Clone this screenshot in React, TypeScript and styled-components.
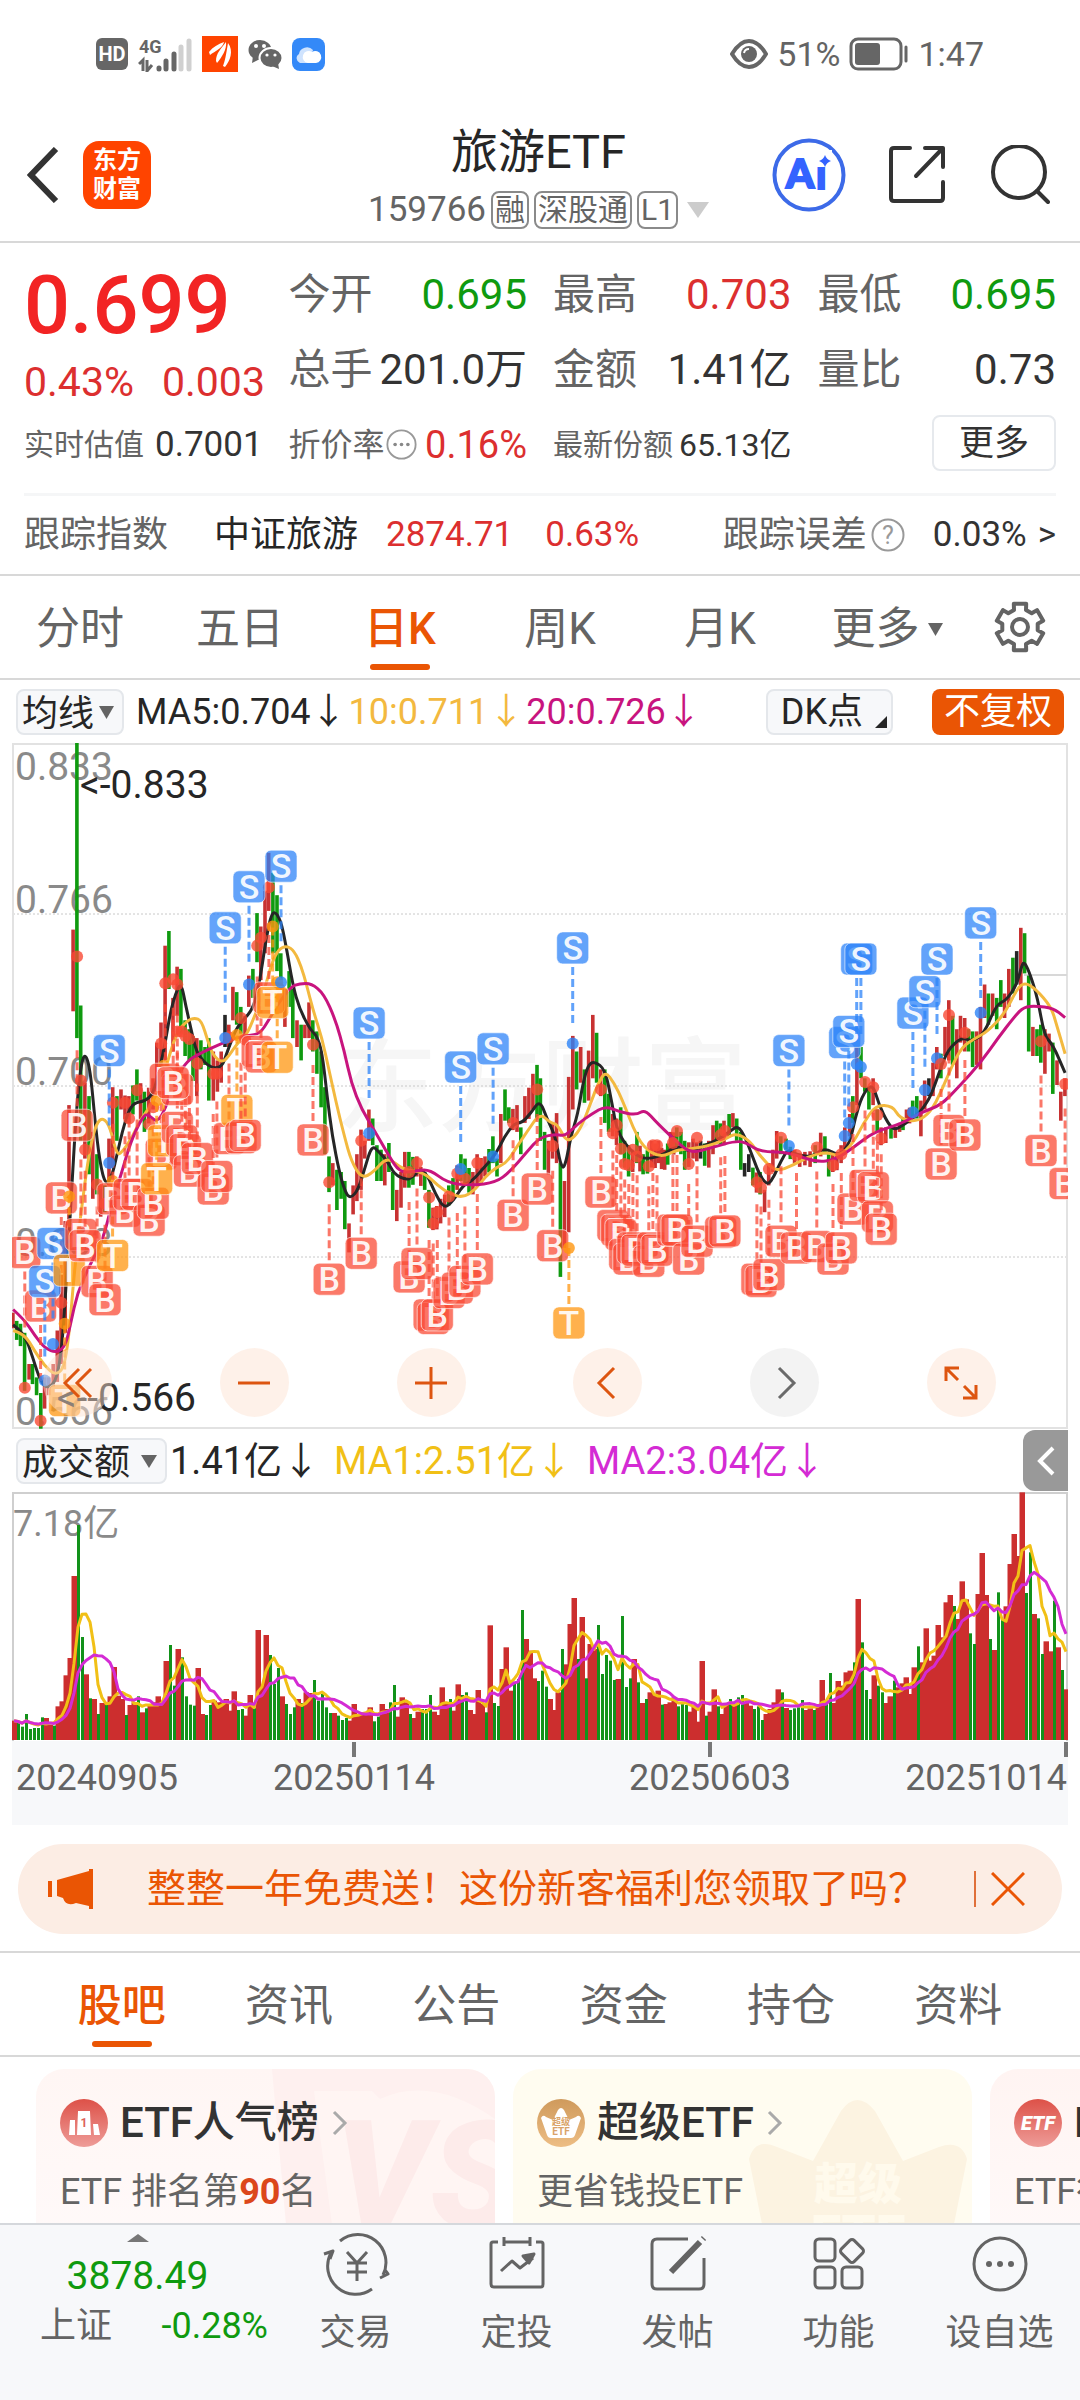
import React from 'react';
import styled, { createGlobalStyle } from 'styled-components';

const FONT = `Roboto, "Noto Sans CJK SC", sans-serif`;

const color = {
  ink: '#262626',
  text: '#333333',
  sub: '#646464',
  faint: '#999999',
  line: '#d8d8d8',
  red: '#dc2f2f',
  green: '#0f9a0f',
  orange: '#ea5504',
  panel: '#f7f8fa',
};

const GlobalStyle = createGlobalStyle`
  * { box-sizing: border-box; }
  body { margin: 0; background: #fff; font-family: ${FONT}; color: ${color.text}; }
  button, select { font: inherit; color: inherit; background: none; border: 0; margin: 0; padding: 0; cursor: pointer; }
  a { color: inherit; text-decoration: none; }
  svg { display: block; flex: none; }
  h1, h2, p { margin: 0; font: inherit; }
`;

const Page = styled.div`
  display: flex;
  flex-direction: column;
  height: 100vh;
`;

const Content = styled.main`
  flex: 1;
  min-height: 0;
  overflow-x: hidden;
  overflow-y: auto;
  scrollbar-width: none;
`;

/* ---------- status bar ---------- */

const StatusBar = styled.div`
  display: flex;
  justify-content: space-between;
  align-items: center;
  height: 108px;
  padding: 0 96px;
  font-size: 34px;
  line-height: 40px;
  color: ${color.sub};
`;

const StatusGroup = styled.div<{ $gap: number }>`
  display: flex;
  align-items: center;
  gap: ${p => p.$gap}px;
`;

/* ---------- header ---------- */

const Header = styled.header`
  display: grid;
  grid-template-columns: 1fr auto 1fr;
  align-items: center;
  height: 135px;
  padding: 0 30px 0 27px;
  border-bottom: 2px solid ${color.line};
`;

const HeaderSide = styled.div<{ $end?: boolean }>`
  display: flex;
  align-items: center;
  gap: ${p => (p.$end ? 42 : 24)}px;
  justify-content: ${p => (p.$end ? 'flex-end' : 'flex-start')};
`;

const IconButton = styled.button`
  display: flex;
  align-items: center;
  justify-content: center;
`;

const BrandMark = styled.a`
  display: grid;
  place-content: center;
  width: 68px;
  height: 68px;
  border-radius: 16px;
  background: #ff4400;
  color: #fff;
  font-size: 24px;
  font-weight: 700;
  line-height: 29px;
  text-align: center;
`;

const TitleBlock = styled.div`
  display: flex;
  flex-direction: column;
  align-items: center;
  padding-top: 6px;
`;

const FundName = styled.h1`
  font-size: 47px;
  line-height: 64px;
  color: ${color.ink};
`;

const CodeRow = styled.button`
  display: flex;
  align-items: center;
  gap: 5px;
  height: 52px;
  font-size: 35px;
  line-height: 52px;
  color: ${color.sub};
`;

const Tag = styled.span`
  height: 38px;
  padding: 0 2px;
  border: 2px solid #8a8a8a;
  border-radius: 8px;
  font-size: 30px;
  line-height: 34px;
`;

/* ---------- quote ---------- */

const Quote = styled.section`
  padding: 14px 24px 0;
  border-bottom: 2px solid ${color.line};
`;

const QuoteGrid = styled.div`
  display: grid;
  grid-template-columns: repeat(4, minmax(0, 1fr));
  grid-auto-rows: 75px;
  column-gap: 26px;
`;

const PriceBlock = styled.div`
  grid-row: span 2;
  color: ${color.red};
`;

const Price = styled.div`
  padding-top: 3px;
  font-size: 81px;
  font-weight: 500;
  line-height: 92px;
  color: #f22424;
`;

const Change = styled.div`
  display: flex;
  gap: 28px;
  font-size: 41px;
  line-height: 60px;
`;

type Tone = 'up' | 'down' | 'flat';
const tones: Record<Tone, string> = { up: color.red, down: color.green, flat: color.text };

const Metric = styled.div<{ $label: number; $size: number; $tight?: boolean }>`
  display: flex;
  align-items: center;
  justify-content: ${p => (p.$tight ? 'flex-start' : 'space-between')};
  gap: ${p => (p.$tight ? 11 : 0)}px;
  white-space: nowrap;
  line-height: 60px;
  font-size: ${p => p.$size}px;
  color: ${color.sub};
  > span:first-child { font-size: ${p => p.$label}px; display: flex; align-items: center; gap: 1px; }
`;

const Value = styled.span<{ $tone?: Tone }>`
  color: ${p => tones[p.$tone ?? 'flat']};
`;

const MoreButton = styled.button`
  justify-self: end;
  align-self: center;
  width: 124px;
  height: 56px;
  margin-bottom: 4px;
  border: 2px solid #e6e9ed;
  border-radius: 8px;
  font-size: 35px;
  line-height: 54px;
`;

const Tracking = styled.a`
  display: flex;
  align-items: center;
  height: 81px;
  margin-top: 11px;
  border-top: 3px solid #f5f6f7;
  font-size: 35px;
  line-height: 50px;
  white-space: nowrap;
`;

const TrackLabel = styled.span<{ $gap: number }>`
  display: flex;
  align-items: center;
  gap: 4px;
  margin-right: ${p => p.$gap}px;
  font-size: 36px;
  color: ${color.sub};
`;

const TrackName = styled.span`
  margin-right: 28px;
  font-size: 36px;
  color: ${color.ink};
`;

const TrackValues = styled.span`
  display: flex;
  gap: 32px;
  flex: 1;
  color: ${color.red};
`;

const TrackMore = styled.span`
  margin-left: 11px;
`;

/* ---------- tabs ---------- */

const PeriodTabs = styled.nav`
  display: grid;
  grid-template-columns: repeat(6, 4fr) 3fr;
  height: 104px;
  border-bottom: 2px solid ${color.line};
`;

const SectionTabs = styled.nav`
  display: grid;
  grid-template-columns: repeat(6, 1fr);
  height: 106px;
  padding: 0 38px;
  border-top: 2px solid ${color.line};
  border-bottom: 2px solid ${color.line};
`;

const Tab = styled.button<{ $active?: boolean }>`
  display: flex;
  flex-direction: column;
  align-items: center;
  justify-content: flex-end;
  gap: 5px;
  padding-bottom: 8px;
  font-size: 44px;
  line-height: 60px;
  font-weight: ${p => (p.$active ? 500 : 400)};
  color: ${p => (p.$active ? color.orange : color.sub)};
  &::after {
    content: '';
    width: 60px;
    height: 6px;
    border-radius: 3px;
    background: ${p => (p.$active ? color.orange : 'transparent')};
  }
`;

const TabText = styled.span`
  display: flex;
  align-items: center;
  gap: 8px;
  padding-left: 14px;
`;

/* ---------- chart ---------- */

const ChartArea = styled.section`
  padding: 0 12px;
`;

const IndicatorRow = styled.div<{ $size: number }>`
  display: flex;
  align-items: center;
  height: 63px;
  padding: 0 4px;
  font-size: ${p => p.$size}px;
  line-height: 46px;
  white-space: nowrap;
`;

const Picker = styled.label<{ $width: number; $gap: number }>`
  position: relative;
  width: ${p => p.$width}px;
  height: 46px;
  margin-right: ${p => p.$gap}px;
  border: 2px solid #e4e7eb;
  border-radius: 8px;
  background: ${color.panel};
  font-size: 36px;
  color: ${color.ink};
  select {
    appearance: none;
    width: 100%;
    height: 42px;
    padding-left: 4px;
    line-height: 42px;
  }
  svg {
    position: absolute;
    right: 8px;
    top: 15px;
    pointer-events: none;
  }
`;

const Legend = styled.span<{ $color: string; $gap: number }>`
  margin-right: ${p => p.$gap}px;
  color: ${p => p.$color};
`;

const Spacer = styled.span`
  flex: 1;
`;

const DkButton = styled.button`
  display: flex;
  align-items: center;
  gap: 12px;
  height: 46px;
  margin-right: 39px;
  padding: 0 4px 0 13px;
  border: 2px solid #e4e7eb;
  border-radius: 8px;
  background: ${color.panel};
  color: ${color.ink};
  line-height: 42px;
  svg { align-self: flex-end; margin-bottom: 5px; }
`;

const AdjustButton = styled.button`
  height: 46px;
  padding: 0 12px;
  border-radius: 8px;
  background: ${color.orange};
  color: #fff;
  line-height: 46px;
`;

const CollapseButton = styled.button`
  display: grid;
  place-items: center;
  width: 45px;
  height: 61px;
  margin-right: -4px;
  border-radius: 12px 0 0 12px;
  background: #999;
`;

const KChart = styled.div`
  position: relative;
  svg { width: 100%; height: auto; }
`;

const ChartControls = styled.div`
  position: absolute;
  left: 31px;
  right: 72px;
  bottom: 12px;
  display: flex;
  justify-content: space-between;
`;

const RoundButton = styled.button<{ $muted?: boolean }>`
  display: grid;
  place-items: center;
  width: 69px;
  height: 69px;
  border-radius: 50%;
  background: ${p => (p.$muted ? 'rgba(235,235,235,0.6)' : 'rgba(253,226,210,0.48)')};
  color: ${p => (p.$muted ? '#6a6a6a' : '#dd5510')};
  svg { width: 40px; height: 40px; }
`;

const VolumeChart = styled.div`
  svg { width: 100%; height: auto; }
`;

/* ---------- banner ---------- */

const Banner = styled.aside`
  display: flex;
  align-items: center;
  height: 90px;
  margin: 19px 18px 17px;
  padding: 0 37px 0 30px;
  border-radius: 45px;
  background: #fcede4;
  color: ${color.orange};
  font-size: 39px;
  line-height: 56px;
  white-space: nowrap;
`;

const BannerText = styled.a`
  flex: 1;
  margin-left: 53px;
`;

const CloseButton = styled.button`
  display: flex;
  align-items: center;
  height: 36px;
  padding-left: 15px;
  border-left: 2px solid #e0703a;
`;

/* ---------- cards ---------- */

const Cards = styled.div`
  display: flex;
  gap: 18px;
  padding: 12px 36px;
  overflow: hidden;
`;

const Card = styled.a<{ $bg: string }>`
  position: relative;
  flex: none;
  width: 459px;
  height: 200px;
  padding: 24px;
  border-radius: 28px;
  background: ${p => p.$bg};
  overflow: hidden;
`;

const CardArt = styled.svg`
  position: absolute;
  right: 0;
  top: 0;
`;

const CardHead = styled.h2`
  position: relative;
  display: flex;
  align-items: center;
  gap: 12px;
  height: 60px;
  font-size: 42px;
  font-weight: 500;
  line-height: 60px;
  color: ${color.text};
  white-space: nowrap;
`;

const CardNote = styled.p`
  position: relative;
  margin-top: 14px;
  font-size: 36px;
  line-height: 50px;
  color: ${color.sub};
  white-space: nowrap;
  b { color: #dc471b; font-weight: 700; }
`;

/* ---------- bottom bar ---------- */

const BottomBar = styled.footer`
  display: grid;
  grid-template-columns: 275fr repeat(5, 161fr);
  height: 177px;
  border-top: 2px solid #d5d8dc;
  background: ${color.panel};
`;

const IndexButton = styled.button`
  display: flex;
  flex-direction: column;
  align-items: center;
  padding-top: 9px;
  color: ${color.green};
  font-size: 39px;
  line-height: 58px;
  > svg { margin-bottom: 5px; }
`;

const IndexLine = styled.span`
  display: flex;
  justify-content: space-between;
  width: 100%;
  padding: 0 7px 0 40px;
  font-size: 36px;
  line-height: 42px;
  > span { color: ${color.sub}; }
`;

const NavButton = styled.button`
  display: flex;
  flex-direction: column;
  align-items: center;
  gap: 14px;
  padding-top: 9px;
  font-size: 36px;
  line-height: 50px;
  color: ${color.sub};
`;

/* ---------- series ---------- */

const RX = 2.904;
const RY = 2.24;
const px = (u: number) => Math.round((u / RX - 12) * 10) / 10;
const py = (v: number) => Math.round((v / RY - 4) * 10) / 10;

const parse = (s: string) =>
  s.trim().split(/\s*;\s*|\n+/).filter(Boolean).map(r => r.trim().split(/\s+/));

const MA5 = `38 1312;70 1330;95 1385;118 1440;140 1455;165 1435;180 1360;190 1250;205 1050;222 830;235 730;247 703;262 740;275 850;290 950;307 1000;325 980;340 930;355 880;372 835;390 815;420 812;445 795;465 735;480 680;495 610;510 570;526 545;540 600;556 655;570 700;590 722;615 737;645 735;660 700;685 650;705 630;735 605;755 540;770 460;785 400;797 385;815 405;830 460;850 550;870 605;900 650;920 665;935 700;950 800;965 890;985 970;1005 1020;1020 1028;1040 1010;1060 960;1080 910;1100 925;1125 945;1145 975;1180 988;1200 980;1220 965;1240 975;1265 1020;1290 1052;1315 1035;1345 1000;1370 990;1400 965;1440 930;1465 890;1495 860;1515 860;1540 840;1568 808;1588 850;1613 890;1628 955;1640 962;1658 890;1678 840;1693 770;1708 730;1726 722;1758 740;1778 820;1793 880;1828 920;1868 942;1918 935;1968 910;1998 925;2043 912;2078 900;2118 880;2143 866;2163 890;2188 940;2208 980;2230 1000;2248 980;2268 945;2288 918;2308 930;2358 937;2393 915;2438 935;2468 905;2483 850;2503 800;2533 770;2553 820;2578 860;2598 877;2628 862;2658 845;2678 830;2703 800;2728 745;2753 695;2793 668;2823 678;2858 660;2893 595;2923 585;2953 550;2968 505;2976 500;2993 530;3013 580;3033 665;3058 685;3093 748`;
const MA10 = `38 1325;70 1332;100 1370;130 1405;160 1425;185 1410;200 1340;215 1200;235 1060;260 920;280 860;300 848;320 870;340 935;360 920;385 890;410 850;435 825;465 780;495 700;515 655;545 630;565 625;585 630;605 680;620 710;645 725;665 710;690 680;715 665;740 620;765 570;790 500;810 470;833 463;855 475;875 510;890 550;910 610;935 670;955 740;975 810;1000 890;1020 945;1050 985;1085 970;1125 935;1170 965;1230 970;1270 1000;1310 1020;1345 1027;1380 1010;1410 980;1440 960;1470 950;1500 915;1530 880;1568 838;1598 860;1618 862;1643 900;1663 895;1688 870;1718 810;1738 770;1758 745;1783 770;1808 810;1838 870;1868 915;1918 938;1968 920;2008 918;2068 910;2108 895;2138 883;2178 900;2208 935;2253 970;2303 955;2348 935;2398 925;2438 935;2478 905;2508 860;2543 820;2593 822;2613 850;2663 858;2703 835;2733 790;2763 735;2793 690;2833 670;2868 655;2918 615;2953 560;2976 545;3008 560;3053 600;3068 640;3093 705`;
const MA20 = `38 1278;70 1300;100 1335;130 1365;165 1375;190 1360;205 1310;225 1240;260 1180;300 1120;325 1040;350 980;380 900;415 845;430 840;455 860;480 830;510 760;545 720;580 705;620 690;650 680;680 670;720 665;755 660;780 630;810 590;845 555;870 548;905 548;940 570;975 630;1000 700;1020 770;1050 830;1090 880;1130 935;1160 970;1200 970;1245 962;1300 995;1370 1000;1440 993;1480 970;1530 925;1568 892;1618 885;1640 890;1678 862;1718 840;1758 822;1798 835;1848 842;1873 830;1908 860;1968 905;2008 928;2068 915;2138 900;2168 905;2208 925;2288 925;2368 948;2428 942;2478 915;2538 880;2618 862;2678 835;2733 820;2783 780;2848 725;2898 670;2948 620;2973 600;3008 598;3058 602;3093 624`;

/* position, high, low and direction */
const RANGES = `38 1285 1320 r;60 1310 1360 g;72 1330 1460 g;85 1400 1435 r;95 1400 1445 g;107 1430 1470 g;119 1465 1545 g;130 1430 1500 r;142 1430 1470 r;155 1400 1450 r;167 1325 1440 r;178 1200 1400 r;190 1080 1330 r;201 820 1090 r;213 427 610 r;224 9 670 g;235 597 900 g;247 770 940 r;259 800 975 g;270 880 1030 r;282 930 1020 g;293 1000 1070 r;305 1000 1060 g;317 895 1000 r;328 780 960 r;340 800 900 g;352 785 830 r;375 800 860 r;398 740 810 g;420 790 880 g;445 760 830 r;456 680 790 r;468 635 740 r;480 463 720 r;491 430 560 g;503 580 700 r;515 510 620 r;526 515 660 g;538 630 710 g;550 650 720 g;572 670 800 r;584 675 740 g;596 690 730 g;607 670 810 g;620 700 810 r;632 720 790 r;643 700 770 r;654 618 690 k;665 640 690 r;677 555 630 r;688 567 640 g;700 600 660 g;712 620 670 r;723 530 600 r;735 515 580 g;747 390 500 g;758 420 540 r;770 340 480 r;781 255 385 r;793 300 480 g;805 350 520 g;816 480 540 g;828 560 645 r;840 520 600 g;851 560 670 g;863 630 690 r;875 640 720 g;886 640 670 r;898 590 670 r;909 630 700 g;921 655 750 g;933 700 825 g;944 780 930 g;956 935 1015 g;967 950 1000 r;979 965 1055 g;991 970 1030 g;1002 990 1098 g;1014 1085 1150 r;1026 1000 1065 r;1037 930 1035 r;1049 875 1010 r;1060 900 940 r;1072 830 900 r;1083 850 910 g;1095 910 990 g;1107 920 990 g;1118 930 1000 r;1130 905 970 g;1141 970 1055 g;1153 1010 1080 r;1165 970 1050 r;1176 925 1005 r;1188 925 1005 g;1211 935 980 r;1234 970 1010 g;1246 1010 1095 g;1258 1050 1100 r;1280 1030 1085 r;1304 1000 1045 g;1328 955 1010 r;1339 930 990 g;1351 940 1000 g;1374 970 1020 r;1386 930 1000 r;1409 935 980 r;1432 890 950 g;1444 940 980 g;1455 840 950 r;1467 785 855 g;1478 825 860 g;1502 820 880 r;1513 870 930 g;1525 800 860 r;1548 750 830 r;1560 730 850 g;1570 760 900 g;1582 880 965 g;1593 900 975 r;1605 860 940 r;1617 838 950 r;1628 950 1205 g;1640 990 1140 r;1652 757 1105 r;1664 665 830 r;1675 700 785 g;1687 690 770 r;1698 740 815 g;1710 698 810 r;1722 618 760 r;1733 658 770 g;1745 740 800 r;1757 740 860 g;1768 795 880 g;1780 840 890 r;1791 850 910 r;1803 825 930 g;1814 900 960 g;1826 910 980 g;1838 920 970 r;1850 880 950 g;1868 930 975 g;1893 900 960 r;1913 900 950 r;1931 920 965 r;1948 880 930 r;1966 870 920 g;1978 880 930 g;1989 900 965 g;2013 895 940 r;2035 900 940 k;2059 900 960 r;2071 865 930 r;2082 855 900 g;2103 855 910 r;2118 840 890 g;2129 838 870 r;2140 850 900 g;2152 880 965 g;2163 950 980 k;2175 930 970 k;2187 960 1000 g;2208 970 1020 g;2221 1010 1060 r;2233 950 1000 r;2245 920 970 r;2256 878 940 r;2268 890 930 g;2283 895 920 g;2308 920 950 r;2338 925 955 r;2368 910 950 g;2384 882 935 r;2396 890 930 g;2407 930 980 g;2419 930 970 r;2443 910 950 r;2454 870 930 r;2468 840 890 r;2477 800 860 g;2489 690 820 r;2501 690 760 g;2512 760 790 g;2524 780 830 g;2536 760 820 r;2548 830 880 g;2559 870 910 r;2573 870 905 r;2588 865 895 g;2613 860 880 r;2633 830 860 r;2651 810 850 g;2663 800 850 g;2675 810 890 r;2686 765 830 r;2698 760 800 k;2710 725 800 r;2721 690 740 r;2733 705 760 g;2745 645 710 r;2756 585 720 r;2767 620 730 g;2779 650 760 r;2790 620 680 r;2802 625 700 r;2813 650 700 g;2825 655 735 g;2837 655 730 r;2848 600 740 r;2860 550 625 r;2871 570 640 g;2883 570 620 r;2895 580 650 g;2907 540 600 g;2918 570 625 r;2930 515 600 r;2942 490 570 g;2953 475 550 k;2965 423 585 r;2976 435 525 g;2988 530 700 g;3000 645 710 r;3012 650 710 g;3023 640 725 g;3035 650 750 r;3047 660 700 r;3058 680 795 g;3070 720 775 r;3081 790 855 r;3093 760 800 r`;

/* kind, position, badge centre and, where it differs from the usual distance, the dot */
const MARKS = `B 72 1150 1453;B 118 1270 1527;B 178 1028 1263;S 154 1130 1355;S 130 1215 1437;T 201 1190 1025;T 188 1482 1310;B 224 865 487;B 235 1110 765;B 247 1135;B 282 1215 998;B 305 1256;T 327 1157 990;B 328 1030;B 363 1058 815;B 375 1020 850;B 398 1020 787;B 433 1078;B 445 1040;B 468 930 682;T 455 985 810;T 475 900;S 317 698 950;B 480 762;B 515 870;B 528 900 655;B 538 920 665;B 515 785 550;B 503 770 538;B 550 968 672;B 573 940 727;B 619 1008 750;B 630 980 750;B 665 895 668;T 688 832 663;B 700 893 625;B 712 888;B 747 700 463;B 758 712 445;B 781 580 332;T 805 713;T 792 590 420;S 654 423 670;S 723 331 550;S 816 285 545;B 909 898 685;B 956 1210 993;B 1049 1152 900;S 1072 636 883;B 1188 1205 970;B 1211 1175 950;B 1246 1290 1027;B 1258 1298 1085;B 1270 1290 1060;B 1304 1240;B 1328 1230 973;B 1350 1215 985;B 1386 1187 950;S 1338 735 963;S 1432 694 935;B 1490 1067 860;B 1560 1008 785;B 1605 1135 912;T 1652 1308 1140;S 1663 468 682;B 1745 1015 785;B 1780 1090 883;B 1791 1100 865;B 1803 1110 918;B 1814 1155 952;B 1826 1165 955;B 1838 1140 920;B 1850 1145 935;B 1884 1170 957;B 1896 1140 910;B 1908 1145 910;B 1954 1100 905;B 1966 1100 878;B 2000 1165 952;B 2024 1125 893;B 2093 1105 887;B 2105 1102 878;B 2198 1210 993;B 2210 1215 1005;B 2233 1200 963;B 2268 1125 893;B 2313 1140 932;B 2372 1137 915;B 2419 1165 955;B 2443 1140 930;B 2477 1053 825;B 2512 1000 768;B 2536 1005 780;B 2548 1070 842;B 2559 1098 895;S 2291 698 912;S 2453 680 889;S 2465 655 860;S 2488 493 728;S 2500 493 735;S 2651 614 836;S 2686 566 786;S 2721 493 715;S 2848 412 613;B 2733 952 728;B 2756 877 618;B 2802 887 658;B 3023 922 677;B 3093 996 773`;

const VOLUME_TOPS = `905r 910g 923g 885g 930g 927g 927g 895g 897r 918r 920g 862r 847r 769r 717r 471r 318g 654g 766r 838g 840r 885g 852r 855g 832r 744r 830r 840r 888g 858r 850r 832g 880r 868g 860r 850r 832r 845r 726r 678g 800g 690r 715g 832g 857g 860g 747r 885r 888g 858g 845r 850r 850r 840r 875r 817r 873g 870g 890r 828r 868g 633r 800r 648r 708g 795g 747g 832r 855g 885g 865g 840r 852g 820r 822r 783g 845g 825g 865g 882g 882r 890g 903g 897g 905r 855r 885r 880r 880r 865r 907g 893g 855r 870r 850g 798g 893r 835r 850r 885g 897r 878r 870g 870g 828g 878r 888r 805r 855r 840g 875r 796r 828g 820g 873r 885r 813r 855r 880g 619r 852g 861g 750r 685r 815r 790g 780g 573g 660r 695r 778r 786g 755g 803g 840r 873r 820r 690g 736r 615r 537r 720g 594r 778g 675r 690r 618g 765g 708g 725g 783g 780r 591g 804g 778g 720r 790g 852r 840g 820r 828r 815r 857g 855r 850r 835r 862g 855g 858g 878r 860r 908r 726r 890g 878r 811r 862g 885r 855r 840g 855r 835g 828g 850r 860r 870g 862g 903g 885r 870r 850r 811r 820g 867r 873g 868g 865g 843g 873r 868r 873g 855r 783r 855g 762g 852r 786r 800r 760r 755r 730g 540r 670g 813g 840g 769r 800g 820g 852r 832r 785g 805r 793r 775r 825r 745r 682g 730r 628r 725r 710r 618r 655r 550r 528r 561g 600r 487r 541r 643g 675g 525r 402r 528r 660g 693r 520g 600g 562r 435r 345r 411r 220r 522g 400g 585r 598g 705g 667r 697r 545g 685r 753g 811r`;

type Candle = { x: number; high: number; low: number; dir: string };

function buildCandles(): Candle[] {
  const pts = parse(RANGES).map(r => ({ u: +r[0], hi: +r[1], lo: +r[2], dir: r[3] }));
  const out: Candle[] = [];
  pts.forEach((p, i) => {
    out.push({ x: px(p.u), high: py(p.hi), low: py(p.lo), dir: p.dir });
    const next = pts[i + 1];
    if (next && next.u - p.u > 16) {
      out.push({
        x: px((p.u + next.u) / 2),
        high: py((p.hi + next.hi) / 2 + 6),
        low: py((p.lo + next.lo) / 2 + 6),
        dir: i % 3 === 0 ? 'g' : 'r',
      });
    }
  });
  return out;
}

/* Quadratic segments through the midpoints keep the averages smooth. */
function smooth(series: string): string {
  const p = parse(series).map(r => [px(+r[0]), py(+r[1])]);
  let d = `M${p[0][0]} ${p[0][1]}`;
  for (let i = 1; i < p.length - 1; i++) {
    const mx = (p[i][0] + p[i + 1][0]) / 2;
    const my = (p[i][1] + p[i + 1][1]) / 2;
    d += `Q${p[i][0]} ${p[i][1]} ${mx.toFixed(1)} ${my.toFixed(1)}`;
  }
  const last = p[p.length - 1];
  return `${d}L${last[0]} ${last[1]}`;
}

const candles = buildCandles();
const candleColor: Record<string, string> = { r: '#c83232', g: '#0f9a0f', k: '#262626' };
const markColor: Record<string, string> = { B: '#f94a35', S: '#2c83f8', T: '#ff960f' };

const marks = parse(MARKS).map(r => {
  const kind = r[0];
  const v = +r[2];
  const usual = kind === 'S' ? v + 240 : kind === 'T' ? v - 168 : v - 215;
  return { kind, x: px(+r[1]), y: py(v), dot: py(r[3] ? +r[3] : usual) };
});

const volumes = VOLUME_TOPS.split(' ').map(s => ({ h: (963 - parseInt(s, 10)) / 3, dir: s.slice(-1) }));
const barX = (i: number) => 1 + i * 4;
const average = (n: number) =>
  volumes
    .map((_, i) => {
      const part = volumes.slice(Math.max(0, i - n + 1), i + 1);
      const mean = part.reduce((a, b) => a + b.h, 0) / part.length;
      return `${barX(i) + 1},${(248 - mean).toFixed(1)}`;
    })
    .join(' ');

function PriceChart() {
  return (
    <svg viewBox="0 0 1056 686" role="img" aria-label="日K线图" fontFamily={FONT}>
      <text x="323" y="381" fontSize="103" fontWeight="500" fill="#f6f6f6">东方财富</text>
      {[171, 343, 514].map(y => (
        <line key={y} x1="1" x2="1055" y1={y} y2={y} stroke="#c8c8c8" strokeDasharray="2 2" />
      ))}
      <rect x="1" y="1" width="1054" height="684" fill="none" stroke="#e2e2e2" strokeWidth="2" />
      <path d="M1012 232H1055" stroke="#d8d8d8" strokeWidth="2" />
      <g fontSize="39" fill="#8a8a8a">
        <text x="3" y="37">0.833</text>
        <text x="3" y="170">0.766</text>
        <text x="3" y="342">0.700</text>
        <text x="3" y="513">0.633</text>
        <text x="3" y="682">0.566</text>
      </g>
      {candles.map((c, i) => (
        <rect key={i} x={c.x - 2} y={c.high} width="3.6" height={Math.max(3, c.low - c.high)} fill={candleColor[c.dir]} />
      ))}
      <g fill="none" strokeWidth="3" strokeLinejoin="round">
        <path d={smooth(MA5)} stroke="#262626" />
        <path d={smooth(MA10)} stroke="#f3b93f" />
        <path d={smooth(MA20)} stroke="#c8147e" />
      </g>
      {marks.map((m, i) => {
        const way = m.dot > m.y ? 1 : -1;
        const fill = markColor[m.kind];
        const start = m.y + way * 19;
        return (
          <g key={i}>
            <path d={`M${m.x} ${start}v${way * 56}`} stroke={fill} strokeOpacity="0.75" strokeWidth="3" strokeDasharray="8 4" />
            <circle cx={m.x} cy={m.dot} r="6" fill={fill} fillOpacity="0.8" />
            <rect x={m.x - 16} y={m.y - 16} width="32" height="32" rx="6" fill={fill} fillOpacity="0.74" stroke="#fff" strokeOpacity="0.6" />
            <text x={m.x} y={m.y + 12} fontSize="34" fontWeight="500" fill="#fff" fillOpacity="0.92" textAnchor="middle">{m.kind}</text>
          </g>
        );
      })}
      <g fontSize="39" fill="#262626">
        <text x="68" y="55">&lt;-0.833</text>
        <text x="184" y="668" textAnchor="end">&lt;--0.566</text>
      </g>
    </svg>
  );
}

function TurnoverChart() {
  return (
    <svg viewBox="0 0 1056 333" role="img" aria-label="成交额" fontFamily={FONT}>
      <rect x="0" y="249" width="1056" height="84" fill={color.panel} />
      <path d="M1 249V1H1055V249" fill="none" stroke="#cfcfcf" strokeWidth="2" />
      <text x="1" y="44" fontSize="36" fill="#8a8a8a">7.18亿</text>
      {volumes.map((b, i) =>
        b.dir === 'r' ? (
          <rect key={i} x={barX(i) - 1.5} y={248 - b.h} width="5.5" height={b.h} fill="#cc2e2e" />
        ) : null
      )}
      {volumes.map((b, i) =>
        b.dir === 'g' ? (
          <rect key={i} x={barX(i)} y={248 - b.h} width="3" height={b.h} fill="#12921a" />
        ) : null
      )}
      <g fill="none" strokeWidth="3" strokeLinejoin="round">
        <polyline points={average(5)} stroke="#f1c016" />
        <polyline points={average(10)} stroke="#d42bd4" />
      </g>
      <path d="M342 250v15M698 250v15M1054 250v15" stroke="#777" strokeWidth="4" />
      <g fontSize="36" fill={color.sub}>
        <text x="4" y="298">20240905</text>
        <text x="342" y="298" textAnchor="middle">20250114</text>
        <text x="698" y="298" textAnchor="middle">20250603</text>
        <text x="1055" y="298" textAnchor="end">20251014</text>
      </g>
    </svg>
  );
}

/* ---------- icons ---------- */

const Down = ({ w = 16, h = 13, fill = '#646464' }: { w?: number; h?: number; fill?: string }) => (
  <svg width={w} height={h} viewBox="0 0 16 12" preserveAspectRatio="none" aria-hidden="true">
    <path d="M0 0H16L8 12Z" fill={fill} />
  </svg>
);

const Signals = () => (
  <StatusGroup $gap={10}>
    <svg width="32" height="32" viewBox="0 0 32 32" aria-label="HD">
      <rect width="32" height="32" rx="6" fill="#666" />
      <text x="16" y="23" fontSize="20" fontWeight="700" fill="#fff" textAnchor="middle">HD</text>
    </svg>
    <svg width="54" height="36" viewBox="0 0 54 36" aria-label="4G">
      <text x="1" y="17" fontSize="18" fontWeight="700" fill="#666">4G</text>
      <path d="M1 28l4-4v11M9 24v11l5-6" fill="none" stroke="#666" strokeWidth="3" />
      <g stroke="#666" strokeWidth="5" strokeLinecap="round"><path d="M21 32v1M28 25v8M36 18v15" /></g>
      <g stroke="#d0d0d0" strokeWidth="5" strokeLinecap="round"><path d="M43 11v22M51 5v28" /></g>
    </svg>
    <svg width="36" height="36" viewBox="0 0 36 36" aria-hidden="true">
      <rect width="36" height="36" fill="#ff4400" />
      <path d="M7 16C11 11 16 8 22 6C21 12 13 15 8 19ZM14 25C14 17 19 13 24 6C25 13 20 21 15 27ZM21 30C23 25 24 19 26 7C32 15 28 25 23 31Z" fill="#fff" />
    </svg>
    <svg width="34" height="32" viewBox="0 0 34 32" aria-hidden="true">
      <path d="M5 18l-1 7 8-4Z" fill="#666" />
      <ellipse cx="12" cy="12" rx="11.500" ry="10" fill="#666" />
      <ellipse cx="23" cy="20" rx="11.500" ry="10" fill="#666" stroke="#fff" strokeWidth="2" />
      <path d="M24 28l7 3-1-6Z" fill="#666" />
      <g fill="#fff"><circle cx="8" cy="8" r="2" /><circle cx="16" cy="8" r="2" /><circle cx="19" cy="17" r="1.600" /><circle cx="27" cy="17" r="1.600" /></g>
    </svg>
    <svg width="33" height="33" viewBox="0 0 33 33" aria-hidden="true">
      <rect width="33" height="33" rx="8" fill="#3489f8" />
      <path d="M8 25a5 5 0 0 1-1-9a8 7.500 0 0 1 14-4L17 25Z" fill="#cfe3fe" />
      <path d="M16 25a6 6 0 1 1 4-11a6 6 0 1 1 4 11Z" fill="#fff" />
    </svg>
  </StatusGroup>
);

const Battery = () => (
  <svg width="60" height="34" viewBox="0 0 60 34" aria-hidden="true">
    <rect x="2" y="2" width="50" height="30" rx="7" fill="none" stroke="#666" strokeWidth="3" />
    <rect x="6" y="6" width="25" height="22" rx="3" fill="#666" />
    <path d="M57 10v14" stroke="#666" strokeWidth="3" strokeLinecap="round" />
  </svg>
);

const Eye = () => (
  <svg width="38" height="32" viewBox="0 0 38 32" aria-hidden="true">
    <path d="M2 16C8 6 13 3 19 3s11 3 17 13C30 26 25 29 19 29S8 26 2 16Z" fill="none" stroke="#666" strokeWidth="4" />
    <circle cx="19" cy="16" r="8" fill="#666" />
    <path d="M14 15a5 5 0 0 1 5-4" fill="none" stroke="#fff" strokeWidth="2" />
  </svg>
);

const AiIcon = () => (
  <svg width="74" height="74" viewBox="0 0 74 74" aria-hidden="true">
    <circle cx="37" cy="37" r="34.500" fill="none" stroke="#3c6ae8" strokeWidth="4" />
    <g fontFamily="Lato, sans-serif" fontSize="40" fontWeight="900" fill="#3463ff" stroke="#3463ff" strokeWidth="2">
      <text x="14" y="50">A</text>
      <text x="44" y="51">i</text>
    </g>
    <path d="M42 12H60V29H44Z" fill="#fff" />
    <path d="M53 17q1.500 4.500 6 6q-4.500 1.500-6 6q-1.500-4.500-6-6q4.500-1.500 6-6Z" fill="#3463ff" />
  </svg>
);

const ShareIcon = () => (
  <svg width="60" height="60" viewBox="0 0 60 60" fill="none" stroke="#333" strokeWidth="4" strokeLinecap="round" strokeLinejoin="round" aria-hidden="true">
    <path d="M22 3H6Q3 3 3 6V53Q3 56 6 56H52Q55 56 55 53V37M37 3H55V22M55 3L28 31" />
  </svg>
);

const SearchIcon = () => (
  <svg width="60" height="60" viewBox="0 0 60 60" fill="none" stroke="#333" strokeWidth="4" strokeLinecap="round" aria-hidden="true">
    <circle cx="29" cy="27" r="26" />
    <path d="M47 46L58 57" />
  </svg>
);

const gearPoints = Array.from({ length: 6 }, (_, k) => {
  const a = (k * Math.PI) / 3 - Math.PI / 2;
  return [[-0.34, 18], [-0.26, 24], [0.26, 24], [0.34, 18]]
    .map(([d, r]) => `${(27 + r * Math.cos(a + d)).toFixed(1)},${(27 + r * Math.sin(a + d)).toFixed(1)}`)
    .join(' ');
}).join(' ');

const GearIcon = () => (
  <svg width="54" height="54" viewBox="0 0 54 54" fill="none" stroke="#646464" strokeWidth="4" strokeLinejoin="round" aria-hidden="true">
    <polygon points={gearPoints} />
    <circle cx="27" cy="27" r="8" />
  </svg>
);

const HintIcon = ({ kind }: { kind: 'more' | 'help' }) => (
  <svg width={kind === 'more' ? 31 : 34} height={kind === 'more' ? 31 : 34} viewBox="0 0 34 34" aria-hidden="true">
    <circle cx="17" cy="17" r="15.500" fill="none" stroke="#999" strokeWidth="2" />
    {kind === 'more' ? (
      <g fill="#888"><circle cx="10" cy="17" r="2" /><circle cx="17" cy="17" r="2" /><circle cx="24" cy="17" r="2" /></g>
    ) : (
      <text x="17" y="26" fontSize="25" fill="#999" textAnchor="middle">?</text>
    )}
  </svg>
);

const controls: { label: string; d: string; muted?: boolean }[] = [
  { label: '最早', d: 'M21 6L7 20L21 34M33 6L19 20L33 34' },
  { label: '缩小', d: 'M4 20H36' },
  { label: '放大', d: 'M4 20H36M20 4V36' },
  { label: '向前', d: 'M26 5L11 20L26 35' },
  { label: '向后', d: 'M14 5L29 20L14 35', muted: true },
  { label: '全屏', d: 'M5 18V5H18M5 5L17 17M35 22V35H22M35 35L23 23' },
];

const Horn = () => (
  <svg width="46" height="40" viewBox="0 0 46 40" fill="#ea5504" aria-hidden="true">
    <path d="M0 12h4v16H0ZM9 11L41 2V0h4v40h-4v-3l-13-3q-10 4-13-5l-6-2Z" />
  </svg>
);

const Podium = () => (
  <svg width="48" height="48" viewBox="0 0 48 48" aria-hidden="true">
    <defs><linearGradient id="podium" x2="0" y2="1"><stop stopColor="#dd5148" /><stop offset="1" stopColor="#ee9c98" /></linearGradient></defs>
    <circle cx="24" cy="24" r="24" fill="url(#podium)" />
    <path d="M10 21h5v15H9ZM18 12h12l1 24H17ZM33 25h5l2 11h-6Z" fill="#fff" />
    <text x="24" y="28" fontSize="12" fontWeight="700" fill="#dd625a" textAnchor="middle">1</text>
  </svg>
);

const Crown = () => (
  <svg width="48" height="48" viewBox="0 0 48 48" aria-hidden="true">
    <defs><linearGradient id="crown" x2="0" y2="1"><stop stopColor="#cf9a5c" /><stop offset="1" stopColor="#edbd84" /></linearGradient></defs>
    <circle cx="24" cy="24" r="24" fill="url(#crown)" />
    <path d="M4 19q2-4 5-1l7 3 5-10q3-4 6 0l5 10 7-3q3-3 5 1l-6 17q-1 3-4 3H14q-3 0-4-3Z" fill="#fff" />
    <text x="24" y="26" fontSize="9" fontWeight="700" fill="#d9a368" textAnchor="middle">超级</text>
    <text x="24" y="36" fontSize="10" fontWeight="700" fill="#d9a368" textAnchor="middle">ETF</text>
  </svg>
);

const EtfBadge = () => (
  <svg width="48" height="48" viewBox="0 0 48 48" aria-hidden="true">
    <circle cx="24" cy="24" r="24" fill="url(#podium)" />
    <text x="24" y="31" fontSize="20" fontWeight="900" fontStyle="italic" fill="#fff" textAnchor="middle">ETF</text>
  </svg>
);

const Chevron = () => (
  <svg width="18" height="26" viewBox="0 0 18 26" fill="none" stroke="#aaa" strokeWidth="3" aria-hidden="true">
    <path d="M3 2L14 13L3 24" />
  </svg>
);

const VersusArt = () => (
  <CardArt width="223" height="200" viewBox="0 0 223 200" aria-hidden="true">
    <path d="M0 0H195Q223 0 223 28V200H18Z" fill="#fef0ef" />
    <path d="M42 22H100L108 30Q160 6 223 50V200H66Z" fill="#fff5f3" />
    <text x="62" y="158" fontSize="150" fontWeight="900" fontStyle="italic" fill="#fdebea">VS</text>
  </CardArt>
);

const CrownArt = () => (
  <CardArt width="223" height="200" viewBox="0 0 223 200" aria-hidden="true">
    <path d="M0 90q6-22 28-12l36 14L92 42q16-22 34 0l28 50 36-14q22-8 28 12l-22 110H22Z" fill="#fcf3e1" />
    <text x="109" y="131" fontSize="44" fontWeight="900" fill="#fffaec" textAnchor="middle">超级</text>
    <text x="109" y="184" fontSize="54" fontWeight="900" fill="#fffaec" textAnchor="middle">ETF</text>
  </CardArt>
);

const navItems: { label: string; icon: React.ReactNode }[] = [
  {
    label: '交易',
    icon: (
      <>
        <path d="M14 7A28 28 0 0 1 57 41M46 55A28 28 0 0 1 5 19M-2 20l9-3-3 8M54 44l8-4-3-4M21 18l10 11 10-11M31 29v18M21 29h20M21 38h20" />
      </>
    ),
  },
  {
    label: '定投',
    icon: (
      <>
        <path d="M11 8H6Q4 8 4 10V50Q4 53 7 53H54Q56 53 56 50V10Q56 8 54 8H49M17 8H43M17 3V12M43 3V12M14 37L25 27 33 34 46 24" />
        <path d="M36 22l11-2-5 9Z" fill="#646464" />
      </>
    ),
  },
  {
    label: '发帖',
    icon: (
      <>
        <path d="M40 5H9Q4 5 4 10V50Q4 55 9 55H51Q56 55 56 50V24" />
        <path d="M23 38L52 8M55 5l1-1" strokeWidth="6" />
      </>
    ),
  },
  {
    label: '功能',
    icon: (
      <>
        <rect x="6" y="5" width="20" height="22" rx="4" />
        <rect x="6" y="33" width="20" height="21" rx="4" />
        <rect x="33" y="33" width="20" height="21" rx="4" />
        <rect x="34" y="8" width="18" height="18" rx="3" transform="rotate(45 43 17)" />
      </>
    ),
  },
  {
    label: '设自选',
    icon: (
      <>
        <circle cx="30" cy="30" r="26" />
        <g fill="#646464" stroke="none"><circle cx="19" cy="30" r="3" /><circle cx="30" cy="30" r="3" /><circle cx="41" cy="30" r="3" /></g>
      </>
    ),
  },
];

export default function App() {
  return (
    <Page>
      <GlobalStyle />
      <Content>
        <StatusBar>
          <Signals />
          <StatusGroup $gap={9}>
            <Eye />
            <span>51%</span>
            <Battery />
            <span>1:47</span>
          </StatusGroup>
        </StatusBar>

        <Header>
          <HeaderSide>
            <IconButton aria-label="返回">
              <svg width="32" height="56" viewBox="0 0 32 56" fill="none" stroke="#333" strokeWidth="6" aria-hidden="true">
                <path d="M29 2L4 28L29 54" />
              </svg>
            </IconButton>
            <BrandMark href="#home">东方<br />财富</BrandMark>
          </HeaderSide>
          <TitleBlock>
            <FundName>旅游ETF</FundName>
            <CodeRow>
              159766
              <Tag>融</Tag>
              <Tag>深股通</Tag>
              <Tag>L1</Tag>
              <svg width="26" height="16" viewBox="0 0 26 16" aria-hidden="true"><path d="M4 0H26L15 16Z" fill="#ccc" /></svg>
            </CodeRow>
          </TitleBlock>
          <HeaderSide $end>
            <IconButton aria-label="AI 助手"><AiIcon /></IconButton>
            <IconButton aria-label="分享"><ShareIcon /></IconButton>
            <IconButton aria-label="搜索"><SearchIcon /></IconButton>
          </HeaderSide>
        </Header>

        <Quote>
          <QuoteGrid>
            <PriceBlock>
              <Price>0.699</Price>
              <Change><span>0.43%</span><span>0.003</span></Change>
            </PriceBlock>
            <Metric $label={42} $size={42}><span>今开</span><Value $tone="down">0.695</Value></Metric>
            <Metric $label={42} $size={42}><span>最高</span><Value $tone="up">0.703</Value></Metric>
            <Metric $label={42} $size={42}><span>最低</span><Value $tone="down">0.695</Value></Metric>
            <Metric $label={42} $size={42}><span>总手</span><Value>201.0万</Value></Metric>
            <Metric $label={42} $size={42}><span>金额</span><Value>1.41亿</Value></Metric>
            <Metric $label={42} $size={42}><span>量比</span><Value>0.73</Value></Metric>
            <Metric $label={30} $size={35} $tight><span>实时估值</span><Value>0.7001</Value></Metric>
            <Metric $label={32} $size={38}>
              <span>折价率<HintIcon kind="more" /></span>
              <Value $tone="up">0.16%</Value>
            </Metric>
            <Metric $label={30} $size={32}><span>最新份额</span><Value>65.13亿</Value></Metric>
            <MoreButton>更多</MoreButton>
          </QuoteGrid>
          <Tracking href="#index">
            <TrackLabel $gap={46}>跟踪指数</TrackLabel>
            <TrackName>中证旅游</TrackName>
            <TrackValues><span>2874.71</span><span>0.63%</span></TrackValues>
            <TrackLabel $gap={28}>跟踪误差<HintIcon kind="help" /></TrackLabel>
            <span>0.03%</span>
            <TrackMore>&gt;</TrackMore>
          </Tracking>
        </Quote>

        <PeriodTabs>
          {['分时', '五日', '日K', '周K', '月K'].map(t => (
            <Tab key={t} $active={t === '日K'}>{t}</Tab>
          ))}
          <Tab><TabText>更多<Down w={15} h={13} /></TabText></Tab>
          <IconButton aria-label="设置"><GearIcon /></IconButton>
        </PeriodTabs>

        <ChartArea>
          <IndicatorRow $size={36}>
            <Picker $width={108} $gap={12}>
              <select aria-label="主图指标"><option>均线</option></select>
              <Down w={15} h={13} />
            </Picker>
            <Legend $color={color.ink} $gap={2}>MA5:0.704↓</Legend>
            <Legend $color="#f3b93f" $gap={2}>10:0.711↓</Legend>
            <Legend $color="#c8147e" $gap={2}>20:0.726↓</Legend>
            <Spacer />
            <DkButton>
              DK点
              <svg width="12" height="12" viewBox="0 0 12 12" aria-hidden="true"><path d="M12 0V12H0Z" fill="#262626" /></svg>
            </DkButton>
            <AdjustButton>不复权</AdjustButton>
          </IndicatorRow>

          <KChart>
            <PriceChart />
            <ChartControls>
              {controls.map(c => (
                <RoundButton key={c.label} aria-label={c.label} $muted={c.muted}>
                  <svg viewBox="0 0 40 40" fill="none" stroke="currentColor" strokeWidth="3" aria-hidden="true"><path d={c.d} /></svg>
                </RoundButton>
              ))}
            </ChartControls>
          </KChart>

          <IndicatorRow $size={38}>
            <Picker $width={151} $gap={3}>
              <select aria-label="副图指标"><option>成交额</option></select>
              <Down w={16} h={13} />
            </Picker>
            <Legend $color={color.ink} $gap={14}>1.41亿↓</Legend>
            <Legend $color="#f1c016" $gap={14}>MA1:2.51亿↓</Legend>
            <Legend $color="#d42bd4" $gap={14}>MA2:3.04亿↓</Legend>
            <Spacer />
            <CollapseButton aria-label="展开侧栏">
              <svg width="20" height="30" viewBox="0 0 20 30" fill="none" stroke="#fff" strokeWidth="4" aria-hidden="true"><path d="M17 2L4 15L17 28" /></svg>
            </CollapseButton>
          </IndicatorRow>

          <VolumeChart><TurnoverChart /></VolumeChart>
        </ChartArea>

        <Banner>
          <Horn />
          <BannerText href="#offer">整整一年免费送！这份新客福利您领取了吗？</BannerText>
          <CloseButton aria-label="关闭">
            <svg width="34" height="34" viewBox="0 0 34 34" stroke="#ea5504" strokeWidth="3" aria-hidden="true"><path d="M1 1L33 33M33 1L1 33" /></svg>
          </CloseButton>
        </Banner>

        <SectionTabs>
          {['股吧', '资讯', '公告', '资金', '持仓', '资料'].map((t, i) => (
            <Tab key={t} $active={i === 0}>{t}</Tab>
          ))}
        </SectionTabs>

        <Cards>
          <Card href="#rank" $bg="linear-gradient(#fff6f4, #fffafa)">
            <VersusArt />
            <CardHead><Podium />ETF人气榜<Chevron /></CardHead>
            <CardNote>ETF 排名第<b>90</b>名</CardNote>
          </Card>
          <Card href="#super" $bg="#fffcf0">
            <CrownArt />
            <CardHead><Crown />超级ETF<Chevron /></CardHead>
            <CardNote>更省钱投ETF</CardNote>
          </Card>
          <Card href="#market" $bg="linear-gradient(#fff4f2, #fffafa)">
            <CardHead><EtfBadge />ETF行情<Chevron /></CardHead>
            <CardNote>ETF行情</CardNote>
          </Card>
        </Cards>
      </Content>

      <BottomBar>
        <IndexButton>
          <svg width="22" height="8" viewBox="0 0 22 8" aria-hidden="true"><path d="M0 8L11 0L22 8Z" fill="#777" /></svg>
          3878.49
          <IndexLine><span>上证</span>-0.28%</IndexLine>
        </IndexButton>
        {navItems.map(n => (
          <NavButton key={n.label}>
            <svg width="60" height="60" viewBox="0 0 60 60" overflow="visible" fill="none" stroke="#646464" strokeWidth="3" strokeLinejoin="round" aria-hidden="true">{n.icon}</svg>
            {n.label}
          </NavButton>
        ))}
      </BottomBar>
    </Page>
  );
}
